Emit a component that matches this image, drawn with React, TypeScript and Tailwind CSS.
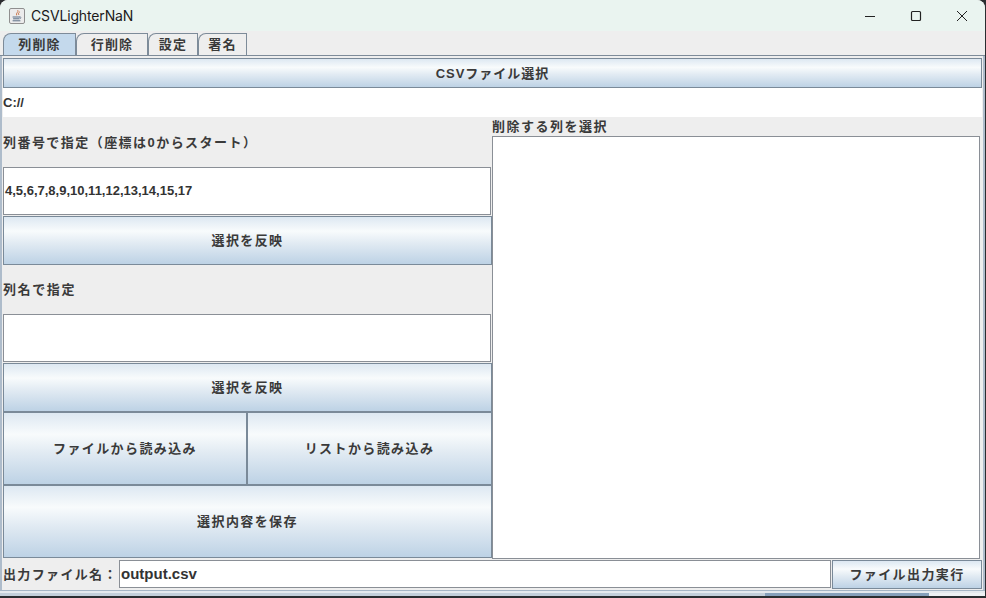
import { ReactNode } from 'react';

const font = "[font-family:'Liberation_Sans','Noto_Sans_CJK_JP',sans-serif]";

function JavaIcon() {
  return (
    <svg width="16" height="16" viewBox="0 0 16 16" fill="none">
      <rect x="0.5" y="0.5" width="15" height="15" rx="1.5" fill="#ececec" stroke="#8f8f8f" />
      <path d="M9 2.5c1 1.5-2.5 2.5-1.5 4.5M10.5 4c-1 .8-1.5 1.5-.8 2.6" stroke="#c9764a" strokeWidth="1" strokeLinecap="round" />
      <path d="M4 9h6.5M4.5 10.8h5.5M4 12.8h7" stroke="#5b6f86" strokeWidth="1" strokeLinecap="round" />
      <path d="M10.5 9c1.8-.4 2 1.4.2 1.8" stroke="#5b6f86" strokeWidth="0.8" />
    </svg>
  );
}

function MetalButton({ children, className = '' }: { children: ReactNode; className?: string }) {
  return (
    <button className={`flex items-center justify-center border border-[#7a8a99] bg-[linear-gradient(180deg,#dde8f2_0%,#f8fbfc_30%,#e2ebf3_55%,#bdd2e5_100%)] pt-[1px] text-[13px] font-bold tracking-[1.4px] text-[#3a3a3a] ${className}`}>
      {children}
    </button>
  );
}

function Field({ children, className = '' }: { children?: ReactNode; className?: string }) {
  return (
    <div className={`flex items-center border border-[#8a8f96] bg-white pl-[1px] font-bold text-[#333] ${className}`}>
      {children}
    </div>
  );
}

const tabs = [
  { label: '列削除', width: 'w-[73px]', active: true },
  { label: '行削除', width: 'w-[72px]', active: false },
  { label: '設定', width: 'w-[50px]', active: false },
  { label: '署名', width: 'w-[49px]', active: false },
];

export default function App() {
  return (
    <div className={`h-[598px] w-[986px] overflow-hidden bg-[#2a2d30] ${font}`}>
      <div className="flex h-[596px] w-[985px] flex-col overflow-hidden rounded-t-[8px] bg-[#eeeeee]">
        {/* Title bar */}
        <div className="flex h-[31px] shrink-0 items-center bg-[#eaf4f0] pl-[9px]">
          <JavaIcon />
          <span className="ml-[6px] font-['Inter','Liberation_Sans',sans-serif] text-[14px] tracking-[-0.15px] text-[#1a1a1a]">CSVLighterNaN</span>
          <div className="ml-auto flex items-center text-[#222]">
            <svg width="46" height="30" viewBox="0 0 46 30" fill="none" stroke="currentColor" strokeWidth="1">
              <path d="M18 15.5h10" />
            </svg>
            <svg width="46" height="30" viewBox="0 0 46 30" fill="none" stroke="currentColor" strokeWidth="1.2">
              <rect x="18.5" y="10.5" width="9" height="9" rx="1" />
            </svg>
            <svg width="46" height="30" viewBox="0 0 46 30" fill="none" stroke="currentColor" strokeWidth="1">
              <path d="M18 10l10 10M28 10L18 20" />
            </svg>
          </div>
        </div>

        {/* Tabs */}
        <div className="flex h-[25px] shrink-0 items-end border-b border-[#7d8b99] pl-[3px]">
          {tabs.map((tab) => (
            <div
              key={tab.label}
              className={`flex h-[22px] items-center justify-center rounded-tl-[8px] border border-b-0 border-[#7d8b99] text-[13px] font-bold tracking-[1.2px] text-[#3a3a3a] ${tab.width} ${tab.active ? 'bg-[#c4d9ec]' : 'bg-[#eeeeee]'}`}
            >
              {tab.label}
            </div>
          ))}
        </div>

        {/* Tab body */}
        <div className="flex min-h-0 flex-1 flex-col border-x-2 border-[#aebccb] pl-[1px] pr-[1px] pt-[2px]">
          <MetalButton className="h-[30px] shrink-0 !tracking-[1px]">CSVファイル選択</MetalButton>
          <div className="flex h-[29px] shrink-0 items-center bg-white pt-[1px] text-[13px] font-bold text-[#333]">C://</div>

          <div className="flex h-[442px] shrink-0">
            {/* Left column */}
            <div className="flex w-[489px] shrink-0 flex-col">
              <div className="flex h-[50px] items-center pt-[2px] text-[13px] font-bold tracking-[1.45px] text-[#3a3a3a]">列番号で指定（座標は0からスタート）</div>
              <Field className="mr-[1px] h-[48px] text-[13px]">4,5,6,7,8,9,10,11,12,13,14,15,17</Field>
              <MetalButton className="mt-[1px] h-[49px]">選択を反映</MetalButton>
              <div className="flex h-[49px] items-center text-[13px] font-bold tracking-[1.6px] text-[#3a3a3a]">列名で指定</div>
              <Field className="mr-[1px] h-[48px]" />
              <MetalButton className="mt-[1px] h-[49px]">選択を反映</MetalButton>
              <div className="flex h-[73px]">
                <MetalButton className="w-[244px]">ファイルから読み込み</MetalButton>
                <MetalButton className="w-[245px]">リストから読み込み</MetalButton>
              </div>
              <MetalButton className="h-[73px]">選択内容を保存</MetalButton>
            </div>

            {/* Right column */}
            <div className="flex w-[488px] shrink-0 flex-col">
              <div className="flex h-[19px] items-center pt-[1px] text-[13px] font-bold tracking-[1.5px] text-[#3a3a3a]">削除する列を選択</div>
              <div className="min-h-0 flex-1 border border-[#8a8f96] bg-white" />
            </div>
          </div>

          {/* Output row */}
          <div className="mt-[1px] flex h-[30px] shrink-0 items-start">
            <span className="flex h-[29px] w-[116px] shrink-0 items-center text-[13px] font-bold tracking-[1.35px] text-[#3a3a3a]">出力ファイル名：</span>
            <Field className="h-[28px] min-w-0 flex-1 text-[15px]">output.csv</Field>
            <MetalButton className="ml-[1px] h-[29px] w-[150px] shrink-0">ファイル出力実行</MetalButton>
          </div>
        </div>

        {/* Bottom window edge */}
        <div className="flex h-[6px] shrink-0 border-t border-[#a5b5c5] bg-[#e4e9ee]">
          <div className="mt-[2px] h-[3px] w-[765px] bg-[#c3cfda]" />
          <div className="mt-[2px] h-[3px] w-[164px] bg-[#86a0bb]" />
          <div className="mt-[2px] h-[3px] flex-1 bg-[#eef1f4]" />
        </div>
      </div>
    </div>
  );
}
